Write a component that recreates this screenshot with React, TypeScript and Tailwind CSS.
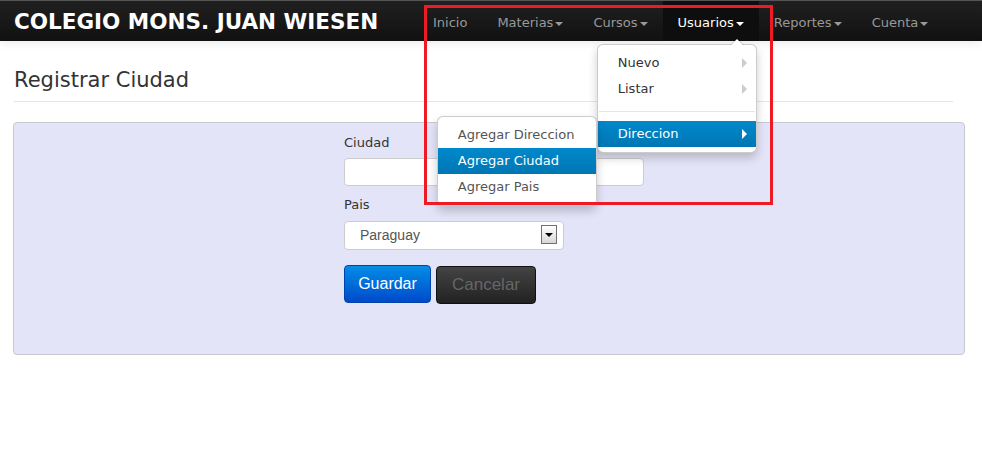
const navItems = [
  { label: "Inicio", caret: false },
  { label: "Materias", caret: true },
  { label: "Cursos", caret: true },
  { label: "Usuarios", caret: true, active: true },
  { label: "Reportes", caret: true },
  { label: "Cuenta", caret: true },
];

function Caret({ white }: { white?: boolean }) {
  return (
    <span
      className={`ml-[2px] inline-block h-0 w-0 border-x-[4px] border-t-[4px] border-x-transparent align-middle ${
        white ? "border-t-white" : "border-t-[#999]"
      }`}
    />
  );
}

function SubCaret({ white }: { white?: boolean }) {
  return (
    <span
      className={`absolute right-[9px] top-[8px] h-0 w-0 border-y-[5px] border-l-[5px] border-y-transparent ${
        white ? "border-l-white" : "border-l-[#ccc]"
      }`}
    />
  );
}

function UsuariosMenu() {
  return (
    <div className="absolute right-[2px] top-[43px] z-10 w-[160px] rounded-[6px] border border-black/20 bg-white py-[5px] shadow-[0_5px_10px_rgba(0,0,0,0.2)]">
      <span className="absolute -top-[7px] right-[12px] h-0 w-0 border-x-[7px] border-b-[7px] border-x-transparent border-b-black/20" />
      <span className="absolute -top-[6px] right-[13px] h-0 w-0 border-x-[6px] border-b-[6px] border-x-transparent border-b-white" />
      <ul className="text-[13px] leading-[20px] text-[#333]">
        <li className="relative px-[20px] py-[3px]">
          Nuevo
          <SubCaret />
        </li>
        <li className="relative px-[20px] py-[3px]">
          Listar
          <SubCaret />
        </li>
        <li className="mx-[1px] my-[9px] h-px bg-[#e5e5e5]" />
        <li className="relative bg-gradient-to-b from-[#0088cc] to-[#0077b3] px-[20px] py-[3px] text-white">
          Direccion
          <SubCaret white />
          <DireccionMenu />
        </li>
      </ul>
    </div>
  );
}

function DireccionMenu() {
  const items = ["Agregar Direccion", "Agregar Ciudad", "Agregar Pais"];
  return (
    <ul className="absolute -top-[5px] right-[calc(100%+1px)] w-[160px] rounded-[6px] border border-black/20 bg-white py-[5px] text-[#555] shadow-[0_5px_10px_rgba(0,0,0,0.2)]">
      {items.map((it) => (
        <li
          key={it}
          className={`whitespace-nowrap px-[20px] py-[3px] ${
            it === "Agregar Ciudad"
              ? "bg-gradient-to-b from-[#0088cc] to-[#0077b3] text-white"
              : ""
          }`}
        >
          {it}
        </li>
      ))}
    </ul>
  );
}

function Navbar() {
  return (
    <div className="relative z-10 flex h-[41px] border-t border-[#555] bg-gradient-to-b from-[#202020] to-[#111] shadow-[0_1px_10px_rgba(0,0,0,0.1)]">
      <div className="w-[418px] pl-[14px] pt-[8px] text-[21.5px] font-bold leading-[25px] text-white">
        COLEGIO MONS. JUAN WIESEN
      </div>
      <ul className="flex text-[13px] leading-[20px]">
        {navItems.map((n) => (
          <li
            key={n.label}
            className={`relative h-[40px] px-[15px] pt-[12px] ${
              n.active ? "bg-[#0e0e0e] text-white" : "text-[#999]"
            }`}
          >
            {n.label}
            {n.caret && <Caret white={n.active} />}
            {n.active && <UsuariosMenu />}
          </li>
        ))}
      </ul>
    </div>
  );
}

export default function App() {
  return (
    <div className="relative min-h-[464px] bg-white font-['DejaVu_Sans',sans-serif] text-[#333]">
      <Navbar />
      <div className="pl-[14px] pr-[29px] pt-[27px]">
        <div className="border-b border-[#e5e5e5] pb-[8px]">
          <h1 className="text-[21px] leading-[25px]">Registrar Ciudad</h1>
        </div>
      </div>
      <div className="ml-[13px] mr-[17px] mt-[20px] h-[233px] rounded-[4px] border border-[#c8c8d0] bg-[#e4e4f8] pl-[330px] pt-[10px]">
        <label className="block text-[13px] leading-[20px]">Ciudad</label>
        <div className="mt-[5px] h-[28px] w-[300px] rounded-[4px] border border-[#ccc] bg-white" />
        <label className="mt-[9px] block text-[13px] leading-[20px]">Pais</label>
        <div className="relative mt-[6px] flex h-[29px] w-[220px] items-center rounded-[4px] border border-[#ccc] bg-white pl-[15px] font-['Liberation_Sans',Arial,sans-serif] text-[14px] text-[#555]">
          Paraguay
          <span className="absolute right-[6px] top-[3px] flex h-[19px] w-[16px] items-center justify-center border border-[#707070] bg-gradient-to-b from-white to-[#d8d8d8]">
            <span className="h-0 w-0 border-x-[4px] border-t-[4px] border-x-transparent border-t-black" />
          </span>
        </div>
        <div className="mt-[15px] flex items-start gap-[5px] font-['Liberation_Sans',Arial,sans-serif]">
          <button className="h-[38px] w-[87px] rounded-[4px] border border-[#0044aa] bg-gradient-to-b from-[#0a8de6] to-[#0049cc] text-[16px] text-white">
            Guardar
          </button>
          <button className="mt-px h-[38px] w-[100px] rounded-[4px] border border-[#111] bg-gradient-to-b from-[#444] to-[#222] text-[17px] text-[#666]">
            Cancelar
          </button>
        </div>
      </div>
      <div className="pointer-events-none absolute left-[424px] top-[5px] z-20 h-[200px] w-[349px] border-[3px] border-[#ed1c24]" />
    </div>
  );
}
